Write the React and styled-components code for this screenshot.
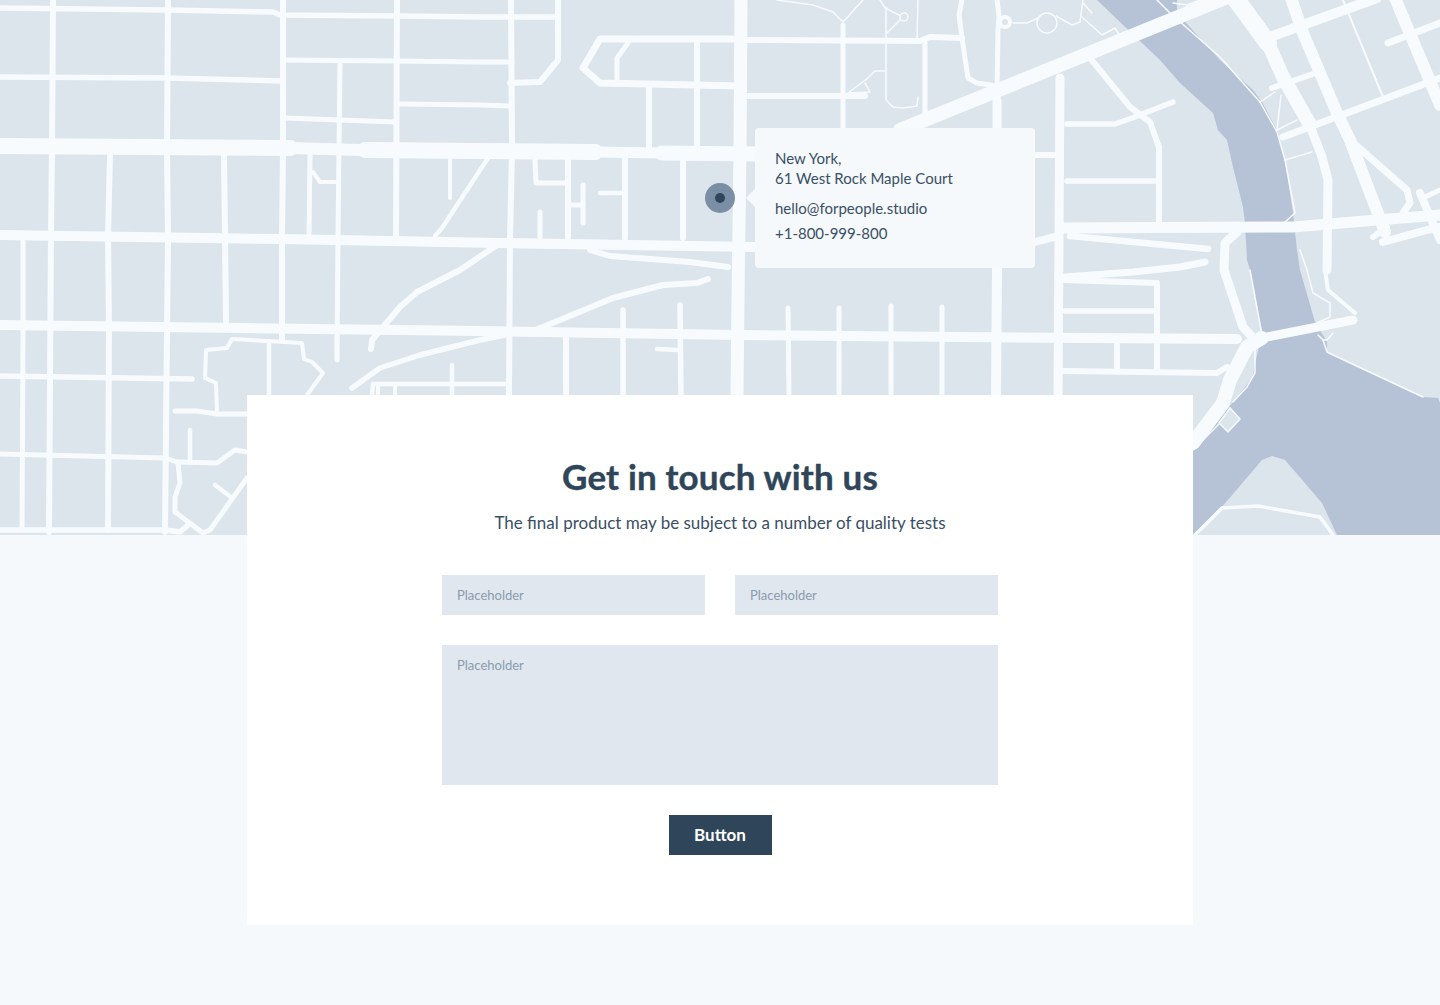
import React from 'react';
import styled, { createGlobalStyle } from 'styled-components';

const ROAD = '#f8fbfe';
const LAND = '#dce4ec';
const WATER = '#b6c2d5';

// [stroke width, points] in map pixels
const roads = [
  // long east-west streets on the left
  [5.5, '0,8 167,10 273,12 280,15 400,16 480,17 558,17'],
  [5.5, '0,77 167,78 283,81'],
  [5, '285,60 395,61 480,62 512,62'],
  [5, '285,118 395,122'],
  [5, '400,104 480,105 512,106'],
  [16, '0,146 290,148'],
  [12, '290,148 360,150'],
  [16, '365,150 480,151 595,152'],
  [11, '595,152 660,153'],
  [15, '662,153 755,154'],
  [6, '1035,155 1058,155'],
  [10, '0,235 280,239 500,243 755,247'],
  [8, '1035,242 1058,236'],
  [10, '0,325 240,328 480,331 740,335 960,337 1237,339'],
  [5.5, '0,376 192,379'],
  [5, '0,454 165,458 177,462 217,463 235,450 247,452'],
  [5.5, '0,530 165,530 180,532 188,525'],
  // north-south streets on the left
  [6, '53,0 52,150 51,235 50,380 49,532'],
  [6, '168,0 167,150 168,240 167,330 165,532'],
  [6, '283,0 283,150 282,240 282,340'],
  [6, '397,0 396,236'],
  [6, '511,0 512,150 510,240 509,395'],
  [6, '110,155 108,235 109,330 108,530'],
  [6, '224,155 225,235 226,322'],
  [5, '23,240 23,330 22,530'],
  [5, '340,64 338,235 337,360'],
  [5, '310,155 309,235'],
  [4, '313,172 320,182 335,182'],
  [4, '450,157 450,198'],
  [4.5, '490,155 442,228 435,236'],
  [6, '558,0 558,60 540,82 510,83'],
  // block by the pin
  [7, '740,39 600,39 583,68 600,83 740,86'],
  [5, '628,43 617,58 617,82'],
  [6, '697,40 697,147'],
  [6, '649,85 649,147'],
  [13, '741,0 740,150 738,300 737,395'],
  [6, '747,40 920,41 930,37 962,38'],
  [6, '747,96 865,96'],
  [5, '843,25 843,128'],
  [5, '925,43 925,115'],
  [5, '535,160 536,183 566,183'],
  [6, '568,157 568,238'],
  [5, '583,185 583,223'],
  [5, '570,205 583,205'],
  [4.5, '600,193 622,193'],
  [6, '625,157 625,238'],
  [6, '683,160 683,238'],
  [5, '540,212 540,238'],
  [6, '590,250 610,256 690,262 728,267'],
  [6, '497,245 460,270 417,292 400,307 383,327 372,340 371,349'],
  [6, '530,332 543,327 613,298 663,285 697,283 708,279'],
  [5.5, '505,335 480,340 420,355 380,368 352,388'],
  [4.5, '372,395 373,384 507,384'],
  [4, '378,385 378,395'],
  [4, '395,385 395,395'],
  [4.5, '452,365 452,395'],
  [6, '566,337 566,395'],
  [5.5, '623,310 623,395'],
  [5.5, '680,305 681,395'],
  [5, '788,308 789,395'],
  [5, '839,308 839,395'],
  [5, '891,306 891,395'],
  [5, '942,307 942,395'],
  [4.5, '657,349 678,350'],
  // lower left blob
  [5, '178,463 180,483 175,497 175,512 203,533 210,530 247,478'],
  [4.5, '215,485 232,498'],
  [4.5, '190,430 190,462'],
  [5, '175,411 197,411 217,414 247,414'],
  [4, '217,413 216,383 205,378 206,350 227,348 232,339 302,343 304,359 312,362 323,373 307,395'],
  [4.5, '269,343 269,395'],
  [4, '283,333 283,340'],
  [4.5, '337,333 337,358'],
  // east of the tooltip
  [14, '900,130 1225,-2'],
  [9, '1060,78 1059,240 1058,395'],
  [10, '997,268 996,395'],
  [9, '997,100 997,128'],
  [5, '962,0 959,15 962,38 968,78 977,83 997,86'],
  [5, '997,0 999,15 998,30 997,90'],
  [5.5, '1067,124 1115,124 1132,118 1173,102'],
  [6, '1090,58 1130,107 1150,122 1159,147 1159,228'],
  [5.5, '1067,181 1157,181'],
  [6, '1063,280 1157,283 1157,368'],
  [7, '1065,277 1133,272 1180,267 1205,262'],
  [5.5, '1065,311 1155,311'],
  [6, '1063,371 1217,373 1227,367'],
  [6, '1117,345 1117,368'],
  [11, '1065,228 1293,227 1377,220 1440,215'],
  [6.5, '1070,236 1208,249'],
  // grid across the river
  [18, '1235,-2 1268,43'],
  [14, '1268,43 1283,77 1309,123'],
  [9, '1309,123 1322,157 1328,180 1327,270'],
  [12, '1291,-2 1303,33 1337,113 1350,140 1385,232'],
  [12, '1395,-2 1440,105'],
  [8, '1420,193 1440,240'],
  [5, '1425,197 1440,190'],
  [10, '1267,38 1377,-2'],
  [7, '1388,43 1440,23'],
  [7, '1283,137 1440,78'],
  [6, '1272,88 1313,74'],
  [2, '1343,0 1383,97'],
  [7, '1350,140 1407,190 1410,203 1403,213'],
  [6, '1373,237 1387,227'],
  [8, '1383,242 1427,230 1440,227'],
  [4, '1325,270 1328,290 1355,313'],
  // bridges and shore road
  [9, '1237,232 1225,243 1224,270 1243,327 1255,340'],
  [9, '1262,338 1353,320'],
  [14, '1193,443 1223,403 1230,380 1247,347 1262,338'],
  [3.5, '1195,535 1222,508 1258,506 1320,517 1333,535'],
  // thin paths
  [1.5, '777,0 813,5 833,12 843,22 863,0'],
  [1.5, '880,0 885,8 903,17 887,33'],
  [1.5, '886,7 886,100 893,107 903,108 917,106 918,97'],
  [1.5, '918,0 917,38'],
  [1.5, '885,71 875,71 868,78 848,93 870,92 865,83'],
  [1.5, '1013,23 1027,23 1038,18'],
  [1.5, '1056,16 1072,25 1080,22 1083,0'],
  [1.5, '1082,17 1102,35 1115,28 1120,36'],
  [1.5, '1083,3 1092,13'],
  [1.5, '1173,3 1187,5 1200,0'],
  [1.5, '1157,0 1170,13 1220,57 1260,102 1277,132 1285,160 1295,213 1285,222'],
  [1.5, '1260,102 1275,92'],
  [1.5, '1277,130 1297,120'],
  [1.5, '1277,130 1281,95'],
  [1.5, '1285,160 1312,152'],
  [1.5, '1250,270 1262,335'],
  [1.5, '1255,350 1255,373 1247,387 1233,402'],
  [1.5, '1220,423 1193,450'],
  [1.5, '1307,270 1313,293 1330,303 1330,317 1317,323'],
  [1.5, '1318,335 1323,340 1327,340 1333,333'],
  [1.5, '1323,340 1327,352 1348,362 1393,383 1423,397'],
  [1.5, '1300,250 1307,270'],
];

const River = 'M1097,0 L1177,0 L1177,13 L1220,60 L1253,90 L1262,102 L1277,130 L1285,160 L1293,213 L1297,250 L1300,270 L1315,322 L1327,342 L1327,352 L1393,383 L1423,397 L1438,398 L1440,403 L1440,535 L1337,535 L1322,503 L1285,460 L1272,456 L1262,460 L1198,535 L1193,535 L1193,450 L1233,402 L1253,377 L1255,363 L1262,335 L1250,270 L1247,260 L1245,223 L1243,207 L1233,167 L1227,140 L1218,130 L1213,113 L1180,83 L1160,60 L1142,43 Z';

const GlobalStyle = createGlobalStyle`
  * {
    box-sizing: border-box;
  }
  body {
    margin: 0;
    background: #f5f9fc;
    font-family: Lato, "Liberation Sans", sans-serif;
    color: #3a4f65;
  }
`;

const Page = styled.div`
  min-height: 1005px;
  padding-bottom: 80px;
`;

const MapArea = styled.section`
  position: relative;
  height: 535px;
  overflow: hidden;
  background: ${LAND};
`;

const MapDrawing = styled.svg`
  display: block;
  width: 1440px;
  height: 535px;
`;

const Pin = styled.div`
  position: absolute;
  left: 705px;
  top: 183px;
  width: 30px;
  height: 30px;
  border-radius: 50%;
  background: #7a8fa6;
  display: flex;
  align-items: center;
  justify-content: center;
  &::after {
    content: '';
    width: 10px;
    height: 10px;
    border-radius: 50%;
    background: #2f4559;
  }
`;

const Tooltip = styled.div`
  position: absolute;
  left: 755px;
  top: 128px;
  width: 280px;
  height: 140px;
  padding: 20px;
  border-radius: 4px;
  background: #f5f9fc;
  font-size: 15px;
  line-height: 20px;
  &::before {
    content: '';
    position: absolute;
    left: -9px;
    top: 61px;
    border-style: solid;
    border-width: 9px 9px 9px 0;
    border-color: transparent #f5f9fc transparent transparent;
  }
`;

const TooltipLine = styled.p`
  margin: ${({ $gap }) => $gap || 0}px 0 0;
`;

const Card = styled.main`
  position: relative;
  width: 946px;
  height: 530px;
  margin: -140px auto 0;
  padding-top: 59px;
  background: #fff;
  display: flex;
  flex-direction: column;
  align-items: center;
`;

const Title = styled.h1`
  margin: 0;
  font-size: 35px;
  line-height: 44px;
  font-weight: 700;
  letter-spacing: 0.15px;
  -webkit-text-stroke: 0.4px #2f4559;
  color: #2f4559;
`;

const Subtitle = styled.p`
  margin: 13px 0 0;
  font-size: 17px;
  line-height: 24px;
`;

const Form = styled.form`
  width: 556px;
  margin-top: 40px;
  display: grid;
  grid-template-columns: 1fr 1fr;
  gap: 30px;
`;

const fieldStyles = `
  display: block;
  width: 100%;
  border: 0;
  border-radius: 0;
  outline: 0;
  padding: 0 15px;
  background: #e0e7ef;
  font-family: Lato, "Liberation Sans", sans-serif;
  font-size: 13px;
  color: #2f4559;
  &::placeholder {
    color: #8a9bad;
    opacity: 1;
  }
`;

const Input = styled.input`
  ${fieldStyles}
  height: 40px;
`;

const TextArea = styled.textarea`
  ${fieldStyles}
  grid-column: 1 / -1;
  height: 140px;
  padding-top: 12px;
  line-height: 17px;
  resize: none;
`;

const Button = styled.button`
  grid-column: 1 / -1;
  justify-self: center;
  width: 103px;
  height: 40px;
  padding: 0 0 2px;
  border: 0;
  background: #2f4559;
  color: #fff;
  font-family: Lato, "Liberation Sans", sans-serif;
  font-size: 17px;
  font-weight: 700;
`;

const App = () => {
  return (
    <Page>
      <GlobalStyle />
      <MapArea>
        <MapDrawing viewBox="0 0 1440 535">
          <path d={River} fill={WATER} />
          <g fill="none" stroke={ROAD} strokeLinejoin="round" strokeLinecap="round">
            {roads.map(([width, points], i) => (
              <polyline key={i} points={points} strokeWidth={width} />
            ))}
            <circle cx="1005" cy="22" r="5" strokeWidth="4" fill={LAND} />
            <circle cx="1047" cy="23" r="10" strokeWidth="1.5" fill={LAND} />
            <circle cx="904" cy="17" r="4" strokeWidth="1.5" fill={LAND} />
          </g>
          <polygon
            points="1230,408 1240,419 1228,432 1219,423"
            fill={LAND}
            stroke={ROAD}
            strokeWidth="1.5"
          />
        </MapDrawing>
        <Pin />
        <Tooltip>
          <TooltipLine>New York,</TooltipLine>
          <TooltipLine>61 West Rock Maple Court</TooltipLine>
          <TooltipLine $gap={10}>hello@forpeople.studio</TooltipLine>
          <TooltipLine $gap={5}>+1-800-999-800</TooltipLine>
        </Tooltip>
      </MapArea>
      <Card>
        <Title>Get in touch with us</Title>
        <Subtitle>The final product may be subject to a number of quality tests</Subtitle>
        <Form onSubmit={(e) => e.preventDefault()}>
          <Input placeholder="Placeholder" />
          <Input placeholder="Placeholder" />
          <TextArea placeholder="Placeholder" />
          <Button type="button">Button</Button>
        </Form>
      </Card>
    </Page>
  );
};

export default App;
